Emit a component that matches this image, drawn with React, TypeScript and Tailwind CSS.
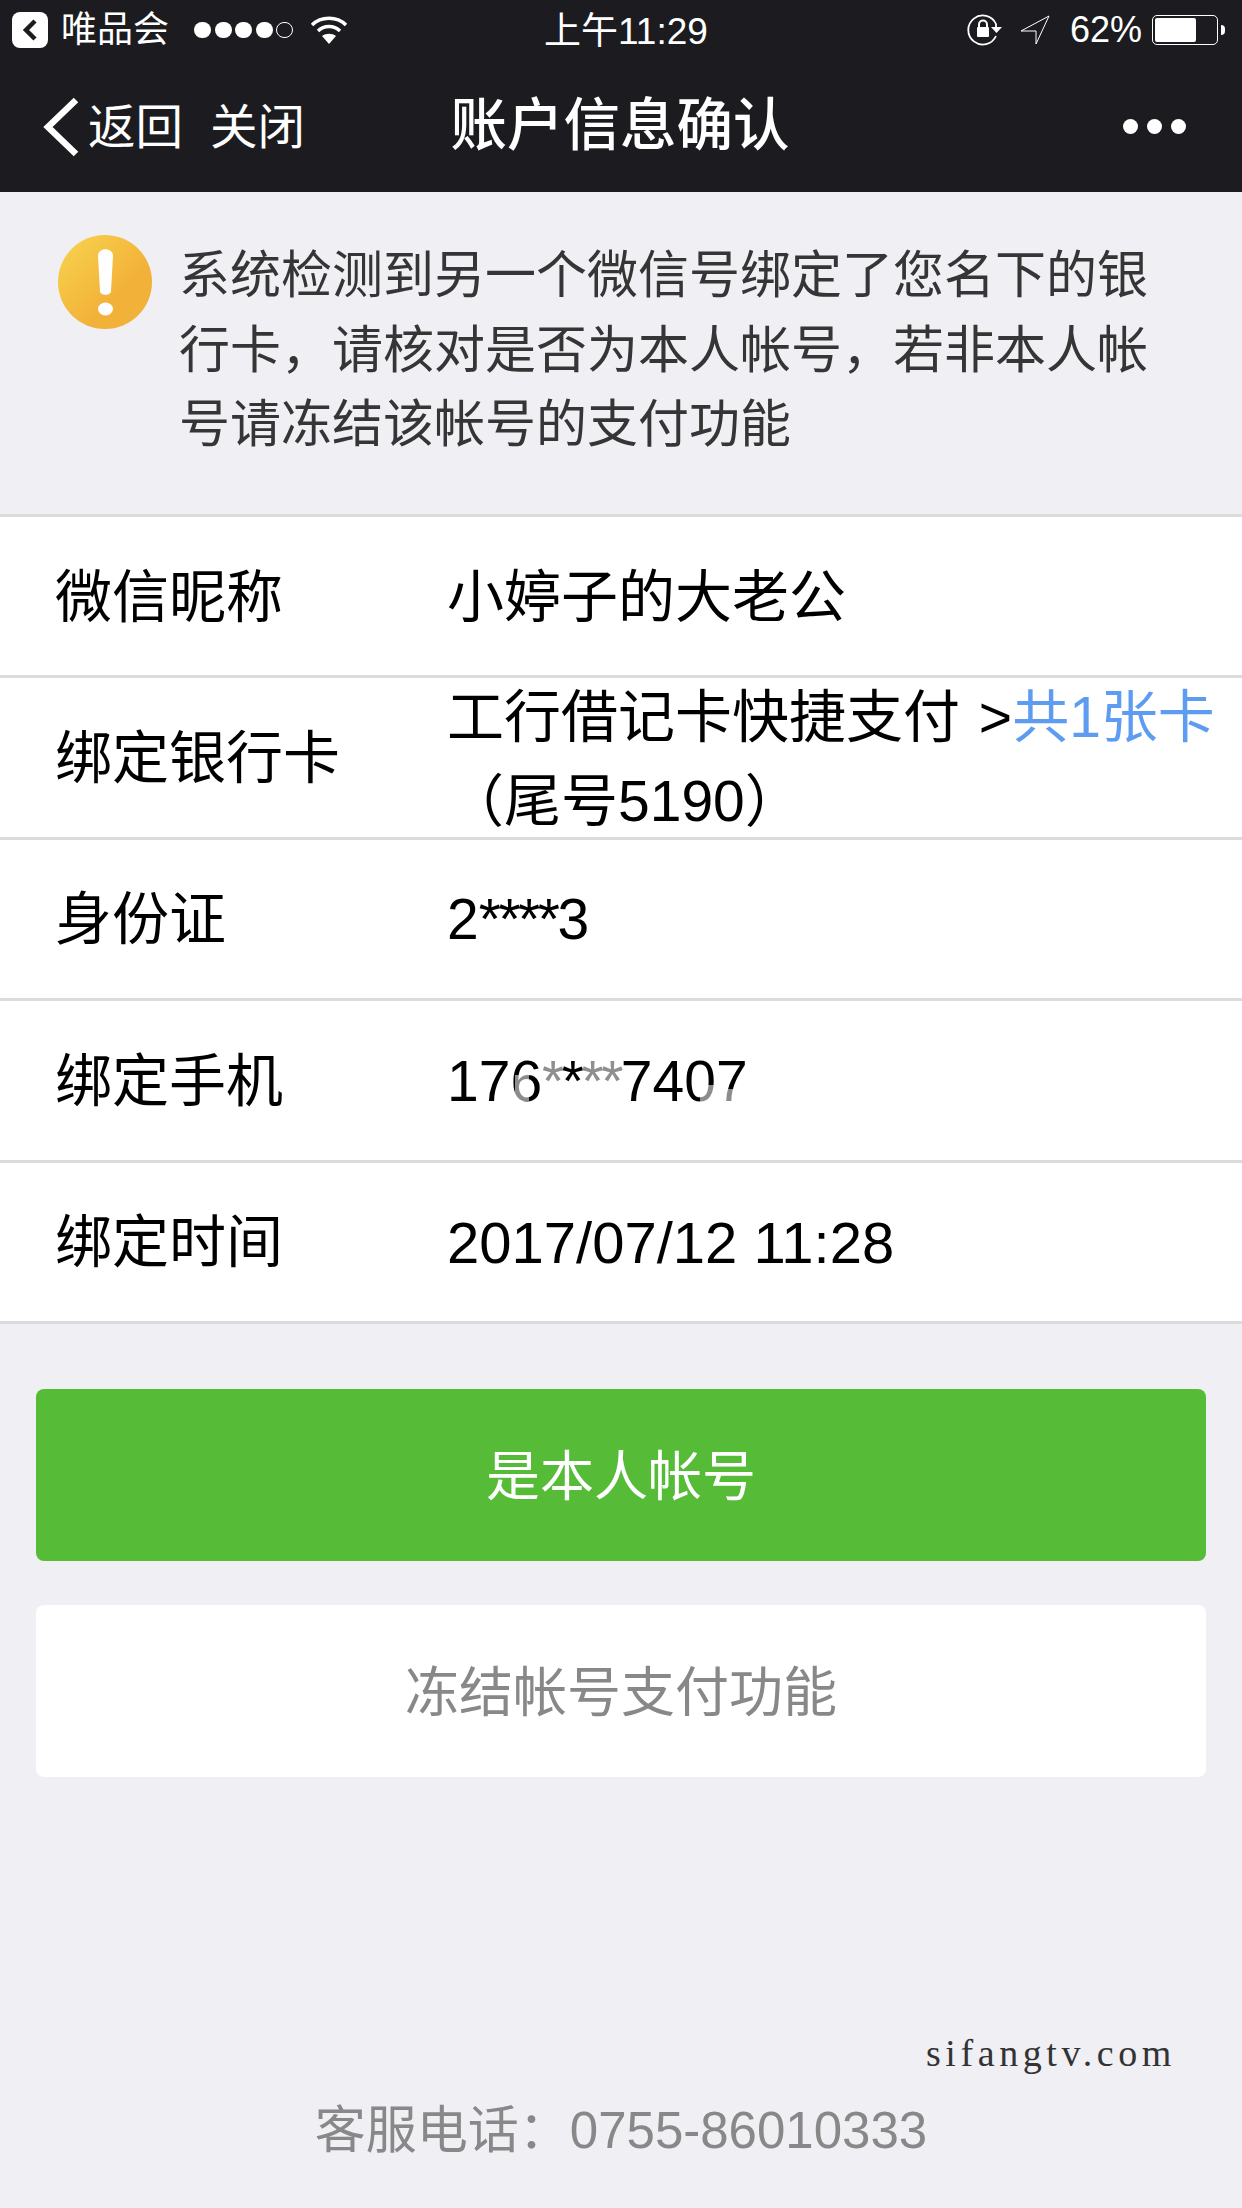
const sans = "font-['Liberation_Sans','Noto_Sans_CJK_SC',sans-serif]";

const rows = [
  { label: "微信昵称", value: <>小婷子的大老公</> },
  {
    label: "绑定银行卡",
    value: (
      <span className="block pr-[8px] leading-[84px]">
        工行借记卡快捷支付 <span className="pl-[3px]">&gt;</span>
        <span className="text-[#5d9cf0]">共1张卡</span>（尾号5190）
      </span>
    ),
  },
  {
    label: "身份证",
    value: (
      <>
        2<span className="tracking-[-2.5px]">****</span>3
      </>
    ),
  },
  {
    label: "绑定手机",
    value: (
      <span className="relative">
        176
        <span className="tracking-[-2.5px]">
          <span className="text-[#8f8f8f]">*</span>*<span className="text-[#8f8f8f]">**</span>
        </span>
        7407
        {/* faded strokes left by the picture's watermark */}
        <i className="absolute left-[68px] top-[26px] h-[26px] w-[14px] bg-white/55" />
        <i className="absolute left-[253px] top-[36px] h-[18px] w-[14px] bg-white/55" />
        <i className="absolute left-[276px] top-[40px] h-[14px] w-[10px] bg-white/55" />
      </span>
    ),
  },
  { label: "绑定时间", value: <span className="text-[58px]">2017/07/12 11:28</span> },
];

function StatusBar() {
  return (
    <div className="flex h-[60px] items-center pl-[12px] pr-[17px] text-[36px] text-white">
      <div className="flex w-[532px] items-center">
        <div className="flex h-[36px] w-[36px] items-center justify-center rounded-[8px] bg-white">
          <svg width="16" height="24" viewBox="0 0 16 24" fill="none" stroke="#1c1c20" strokeWidth="4.5">
            <path d="M13 3 L4 12 L13 21" />
          </svg>
        </div>
        <span className="ml-[13px] leading-none">唯品会</span>
        <div className="ml-[25px] flex items-center gap-[3.5px]">
          <i className="h-[16px] w-[17px] rounded-full bg-white" />
          <i className="h-[16px] w-[17px] rounded-full bg-white" />
          <i className="h-[16px] w-[17px] rounded-full bg-white" />
          <i className="h-[16px] w-[17px] rounded-full bg-white" />
          <i className="h-[16px] w-[17px] rounded-full border border-white" />
        </div>
        <svg className="ml-[17px]" width="38" height="28" viewBox="0 0 38 28" fill="none" stroke="#fff" strokeWidth="3.4">
          <path d="M2 9 C11 0 27 0 36 9" />
          <path d="M8 15 C14 9 24 9 30 15" />
          <path d="M19 28 L12 20 C16 17 22 17 26 20 Z" fill="#fff" stroke="none" />
        </svg>
      </div>
      <span className="mt-[2px] text-[37px] leading-none">上午11:29</span>
      <div className="ml-auto flex items-center">
        <svg width="36" height="32" viewBox="0 0 36 32" fill="none" stroke="#fff" strokeWidth="1.8">
          <path d="M29 22 A14.5 14.5 0 1 1 29 10 L29 14" />
          <path d="M24 13 L35 13 L29.5 19 Z" fill="#fff" stroke="none" />
          <path d="M12 13 V10.5 A4 4 0 0 1 20 10.5 V13" strokeWidth="2" />
          <rect x="10" y="13" width="12" height="10" rx="1" fill="#fff" stroke="none" />
        </svg>
        <svg className="ml-[17px]" width="30" height="30" viewBox="0 0 30 30" fill="none" stroke="#fff" strokeWidth="1">
          <path d="M29 1 L1 16 L16 16 L16 29 Z" />
        </svg>
        <span className="ml-[20px] leading-none">62%</span>
        <div className="ml-[10px] h-[30px] w-[66px] rounded-[5px] border border-white p-[2px]">
          <div className="h-full w-[41px] rounded-[2px] bg-white" />
        </div>
        <div className="ml-[3px] h-[10px] w-[4px] rounded-r-full bg-white" />
      </div>
    </div>
  );
}

function NavBar() {
  return (
    <div className="grid h-[132px] grid-cols-[1fr_auto_1fr] items-center pt-[1px] text-white">
      <div className="flex items-center pl-[43px] text-[47.5px] leading-none">
        <svg width="36" height="60" viewBox="0 0 36 60" fill="none" stroke="#fff" strokeWidth="6.5">
          <path d="M33 3 L5 30 L33 57" />
        </svg>
        <span className="ml-[9px] mt-[2px]">返回</span>
        <span className="ml-[27px] mt-[2px]">关闭</span>
      </div>
      <div className="pr-[2px] text-[56.5px] font-medium leading-none">账户信息确认</div>
      <div className="flex justify-end gap-[9px] pr-[56px]">
        <i className="h-[15px] w-[15px] rounded-full bg-white" />
        <i className="h-[15px] w-[15px] rounded-full bg-white" />
        <i className="h-[15px] w-[15px] rounded-full bg-white" />
      </div>
    </div>
  );
}

function WarnIcon() {
  return (
    <svg className="shrink-0" width="94" height="94" viewBox="0 0 94 94">
      <defs>
        <linearGradient id="warn" x1="0.15" y1="0.05" x2="0.7" y2="0.6">
          <stop offset="0" stopColor="#f7cf4c" />
          <stop offset="1" stopColor="#f2b138" />
        </linearGradient>
      </defs>
      <circle cx="47" cy="47" r="47" fill="url(#warn)" />
      <path d="M40 21 C40 12 55 12 55 21 L53 56 C53 61 42 61 42 56 Z" fill="#fff" />
      <ellipse cx="47.5" cy="74" rx="7.5" ry="6.5" fill="#fff" />
    </svg>
  );
}

export default function App() {
  return (
    <div className={`${sans} flex h-[2208px] w-[1242px] flex-col overflow-hidden bg-[#efeff4]`}>
      <header className="bg-[#1c1c20]">
        <StatusBar />
        <NavBar />
      </header>

      {/* Notice */}
      <div className="flex h-[322px] items-start pl-[58px] pr-[80px] pt-[43px]">
        <WarnIcon />
        <p className="ml-[27px] mt-[4px] text-[51px] leading-[74.5px] text-[#353535]">
          系统检测到另一个微信号绑定了您名下的银行卡，请核对是否为本人帐号，若非本人帐号请冻结该帐号的支付功能
        </p>
      </div>

      {/* Info rows */}
      <div className="border-t-[3px] border-[#dcdcdc] bg-white">
        {rows.map((row) => (
          <div
            key={row.label}
            className="flex h-[161.4px] items-center border-b-[3px] border-[#dcdcdc] pt-[2px] text-[57px] leading-none text-black"
          >
            <div className="w-[447px] shrink-0 pl-[55px]">{row.label}</div>
            <div className="min-w-0 flex-1">{row.value}</div>
          </div>
        ))}
      </div>

      {/* Buttons */}
      <div className="flex flex-col gap-[44px] px-[36px] pt-[65px] text-[54px]">
        <button className="flex h-[172px] items-center justify-center rounded-[8px] bg-[#56bb37] pt-[5px] text-white">
          是本人帐号
        </button>
        <button className="flex h-[172px] items-center justify-center rounded-[8px] bg-white pt-[5px] text-[#888]">
          冻结帐号支付功能
        </button>
      </div>

      <div className="mt-auto">
        <div className="pr-[66px] text-right font-['Liberation_Serif',serif] text-[38px] leading-none tracking-[4.6px] text-[#333]">
          sifangtv.com
        </div>
        <div className="pb-[47px] pt-[29px] text-center text-[51px] leading-[60px] text-[#888]">
          客服电话：0755-86010333
        </div>
      </div>
    </div>
  );
}
